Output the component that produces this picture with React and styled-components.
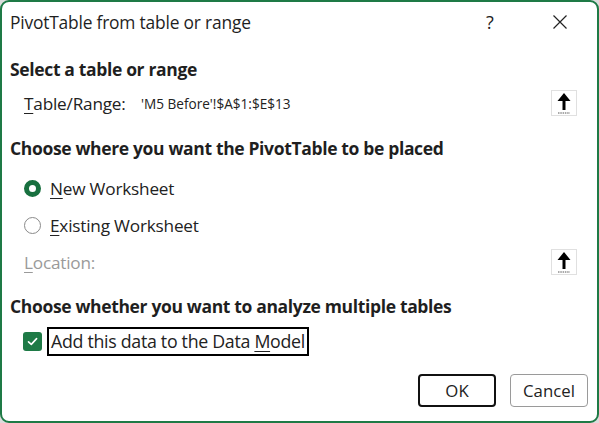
import React from "react";
import styled, { createGlobalStyle } from "styled-components";

const GlobalStyle = createGlobalStyle`
  html, body {
    margin: 0;
    padding: 0;
    background: #dcdcdc;
  }
  body {
    font-family: "Open Sans", "Noto Sans", sans-serif;
    color: #1f1f1f;
  }
`;

const Dialog = styled.div`
  box-sizing: border-box;
  width: 599px;
  height: 423px;
  background: #fff;
  border: 2px solid #1e7a46;
  border-radius: 9px;
  display: flex;
  flex-direction: column;
  overflow: hidden;
`;

const TitleBar = styled.div`
  height: 40px;
  display: flex;
  align-items: center;
  padding-left: 8px;
  flex-shrink: 0;
`;

const Title = styled.div`
  flex: 1;
  font-size: 17.4px;
  letter-spacing: -0.2px;
`;

const TitleButton = styled.div`
  width: 74px;
  height: 40px;
  display: flex;
  align-items: center;
  justify-content: center;
  font-size: 18px;
  color: #222;
`;

const HelpButton = styled(TitleButton)`
  padding-left: 8px;
  box-sizing: border-box;
`;

const Body = styled.div`
  padding: 0 8px;
  display: flex;
  flex-direction: column;
`;

const Heading = styled.div`
  height: 24px;
  margin-top: ${(p) => p.$top}px;
  display: flex;
  align-items: center;
  font-size: 17.5px;
  font-weight: 700;
  letter-spacing: -0.35px;
`;

const Row = styled.div`
  height: 26px;
  margin-top: ${(p) => p.$top}px;
  display: flex;
  align-items: center;
  padding-left: ${(p) => p.$indent ?? 14}px;
`;

const Label = styled.span`
  font-size: 17.2px;
  letter-spacing: -0.2px;
  color: ${(p) => (p.$muted ? "#9a9a9a" : "#222")};
  width: ${(p) => (p.$width ? `${p.$width}px` : "auto")};
  flex-shrink: 0;
`;

const Key = styled.span`
  text-decoration: underline;
  text-underline-offset: 3px;
`;

const RangeValue = styled.span`
  flex: 1;
  font-size: 13.6px;
  color: #222;
`;

const Spacer = styled.div`
  flex: 1;
`;

const PickerButton = styled.div`
  width: 26px;
  height: 26px;
  box-sizing: border-box;
  border: 1px solid #e0e0e0;
  display: flex;
  align-items: center;
  justify-content: center;
  margin-right: 12px;
`;

const RadioCircle = styled.span`
  box-sizing: border-box;
  width: 17px;
  height: 17px;
  border-radius: 50%;
  border: ${(p) => (p.$checked ? "5px solid #18703f" : "1px solid #8a8a8a")};
  margin-right: 9px;
  flex-shrink: 0;
`;

const CheckBox = styled.span`
  width: 19px;
  height: 19px;
  border-radius: 3px;
  background: #1e7a46;
  display: flex;
  align-items: center;
  justify-content: center;
  margin-right: 5px;
  flex-shrink: 0;
`;

const FocusLabel = styled.span`
  border: 2px solid #000;
  padding: 0 2px 0 2px;
  height: 25px;
  display: flex;
  align-items: center;
  font-size: 17.8px;
  letter-spacing: -0.3px;
  color: #222;
`;

const Footer = styled.div`
  margin-top: auto;
  padding: 0 9px 14px 0;
  display: flex;
  justify-content: flex-end;
  gap: 14px;
`;

const Button = styled.button`
  box-sizing: border-box;
  width: 78px;
  height: 33px;
  background: #fff;
  border: ${(p) => (p.$primary ? "2px solid #111" : "1px solid #9a9a9a")};
  border-radius: 4px;
  font-family: inherit;
  font-size: 16.8px;
  color: #222;
`;

const UpArrow = () => (
  <svg width="20" height="24" viewBox="0 0 20 24">
    <path d="M10 2 L16.5 10 L11.5 10 L11.5 19 L8.5 19 L8.5 10 L3.5 10 Z" fill="#000" />
    <line x1="4" y1="22" x2="16" y2="22" stroke="#555" strokeWidth="1" strokeDasharray="1.5 0.8" />
  </svg>
);

const Check = () => (
  <svg width="13" height="13" viewBox="0 0 13 13">
    <path d="M2.5 6.8 L5.3 9.4 L10.6 3.6" fill="none" stroke="#fff" strokeWidth="1.6" strokeLinecap="round" strokeLinejoin="round" />
  </svg>
);

const Close = () => (
  <svg width="16" height="16" viewBox="0 0 16 16">
    <path d="M1.5 1.5 L14.5 14.5 M14.5 1.5 L1.5 14.5" stroke="#222" strokeWidth="1.2" />
  </svg>
);

const App = () => (
  <>
    <GlobalStyle />
    <Dialog>
      <TitleBar>
        <Title>PivotTable from table or range</Title>
        <HelpButton>?</HelpButton>
        <TitleButton>
          <Close />
        </TitleButton>
      </TitleBar>

      <Body>
        <Heading $top={15}>Select a table or range</Heading>
        <Row $top={9}>
          <Label $width={117}>
            <Key>T</Key>able/Range:
          </Label>
          <RangeValue>'M5 Before'!$A$1:$E$13</RangeValue>
          <PickerButton>
            <UpArrow />
          </PickerButton>
        </Row>

        <Heading $top={20}>Choose where you want the PivotTable to be placed</Heading>
        <Row $top={15}>
          <RadioCircle $checked />
          <Label>
            <Key>N</Key>ew Worksheet
          </Label>
        </Row>
        <Row $top={11}>
          <RadioCircle />
          <Label>
            <Key>E</Key>xisting Worksheet
          </Label>
        </Row>
        <Row $top={11}>
          <Label $muted>
            <Key>L</Key>ocation:
          </Label>
          <Spacer />
          <PickerButton>
            <UpArrow />
          </PickerButton>
        </Row>

        <Heading $top={19}>Choose whether you want to analyze multiple tables</Heading>
        <Row $top={10} $indent={13}>
          <CheckBox>
            <Check />
          </CheckBox>
          <FocusLabel>
            Add this data to the Data&nbsp;<Key>M</Key>odel
          </FocusLabel>
        </Row>
      </Body>

      <Footer>
        <Button $primary>OK</Button>
        <Button>Cancel</Button>
      </Footer>
    </Dialog>
  </>
);

export default App;
